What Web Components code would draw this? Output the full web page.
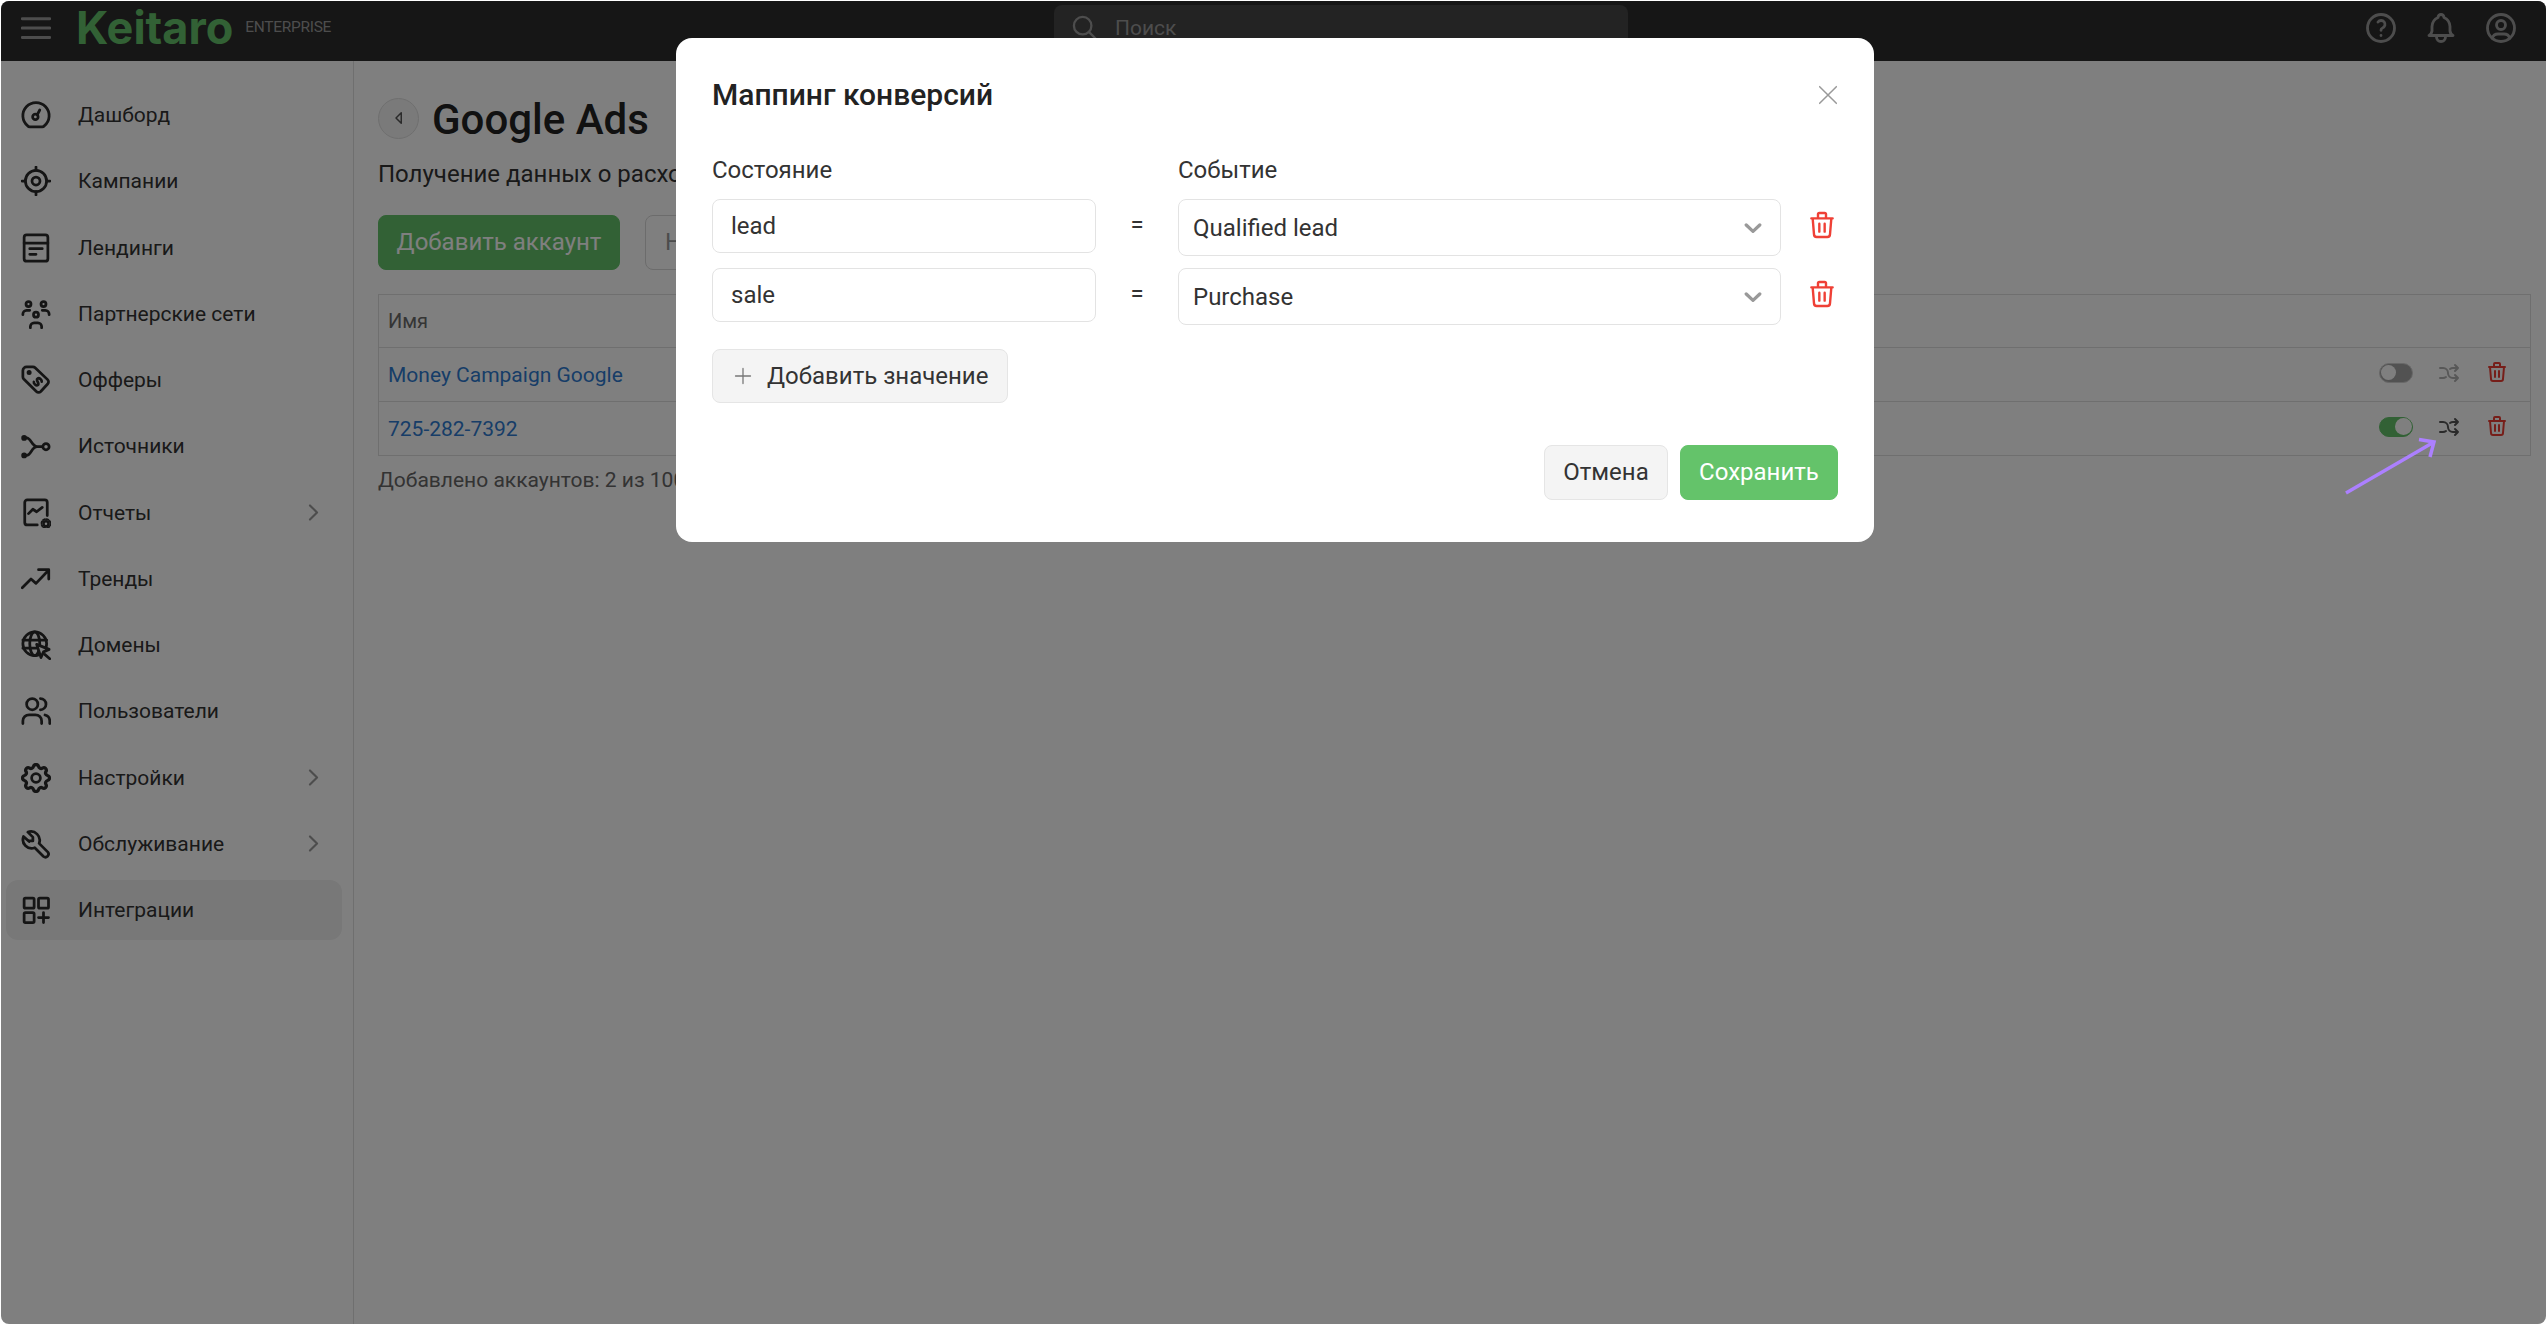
<!DOCTYPE html>
<html lang="ru">
<head>
<meta charset="utf-8">
<title>Keitaro</title>
<style>
  html, body { margin: 0; background: #fff; }
  body { font-family: Roboto, "Liberation Sans", sans-serif; }
</style>
</head>
<body>
<k-app>
  <k-topbar slot="top"></k-topbar>
  <k-sidebar slot="side">
    <k-nav-item icon="dashboard">Дашборд</k-nav-item>
    <k-nav-item icon="target">Кампании</k-nav-item>
    <k-nav-item icon="landing">Лендинги</k-nav-item>
    <k-nav-item icon="partners">Партнерские сети</k-nav-item>
    <k-nav-item icon="tag">Офферы</k-nav-item>
    <k-nav-item icon="sources">Источники</k-nav-item>
    <k-nav-item icon="report" more>Отчеты</k-nav-item>
    <k-nav-item icon="trend">Тренды</k-nav-item>
    <k-nav-item icon="domain">Домены</k-nav-item>
    <k-nav-item icon="users">Пользователи</k-nav-item>
    <k-nav-item icon="settings" more>Настройки</k-nav-item>
    <k-nav-item icon="tool" more>Обслуживание</k-nav-item>
    <k-nav-item icon="apps" active>Интеграции</k-nav-item>
  </k-sidebar>
  <k-accounts slot="main">
    <k-account-row name="Money Campaign Google"></k-account-row>
    <k-account-row name="725-282-7392" on></k-account-row>
  </k-accounts>
  <k-modal slot="modal" heading="Маппинг конверсий">
    <k-mapping-row state="lead" event="Qualified lead"></k-mapping-row>
    <k-mapping-row state="sale" event="Purchase"></k-mapping-row>
  </k-modal>
</k-app>

<script>
// icons, 24 units box
const ICONS = {
  menu: '<path d="M1 4.5h22M1 12h22M1 19.5h22"/>',
  dashboard: '<path d="M7 21.5h10a2 2 0 0 0 1.6-.8a10.5 10.5 0 1 0-13.2 0a2 2 0 0 0 1.6.8z"/><circle cx="11.5" cy="13.5" r="2.2"/><path d="M13 11.8l2-3.8"/>',
  target: '<circle cx="12" cy="12" r="8.5"/><circle cx="12" cy="12" r="3.2"/><path d="M12 .8v2.7M12 20.5v2.7M.8 12h2.7M20.5 12h2.7"/>',
  landing: '<rect x="2.5" y="1.5" width="19" height="21" rx="2"/><path d="M2.5 8h19M7 12.5h10M7 17h5"/>',
  partners: '<circle cx="6" cy="4" r="2"/><circle cx="18" cy="4" r="2"/><circle cx="12" cy="12.5" r="2"/><path d="M1.5 12.5v-.5a3 3 0 0 1 3-3h2.5M22.5 12.5v-.5a3 3 0 0 0-3-3h-2.5M7.5 23v-1a3 3 0 0 1 3-3h3a3 3 0 0 1 3 3v1"/>',
  tag: '<path d="M4.5 1.5h5a2.5 2.5 0 0 1 1.8.7l10 9.500a2.5 2.5 0 0 1 0 3.500l-5.500 6a2.5 2.5 0 0 1-3.500 0L2.200 11.200a2.5 2.5 0 0 1-.7-1.800v-5a3 3 0 0 1 3-2.900z"/><circle cx="6.5" cy="6" r=".9" fill="currentColor"/><path transform="rotate(45 13.5 13.5)" d="M15.5 11.2c-.6-1-3.8-1.2-4 .8s4 1.300 3.800 3.200-3.500 1.600-4 .6"/>',
  sources: '<path d="M3 5.5h1.5c3.5 0 4 7 8.5 7h4M3 19.5h1.5c3.5 0 4-7 8.5-7"/><circle cx="20" cy="12.5" r="2.5"/><circle cx="2.5" cy="5.5" r="1.2" fill="currentColor"/><circle cx="2.5" cy="19.5" r="1.2" fill="currentColor"/>',
  report: '<path d="M13 21.5H5a2 2 0 0 1-2-2V3.5a2 2 0 0 1 2-2h14a2 2 0 0 1 2 2V14"/><path d="M6 12.5l3.5-3.5 3 2 4.5-3.5"/><circle cx="20" cy="20.5" r="2" stroke-width="2"/><circle cx="20" cy="20.5" r="3.6" stroke-width="1.5" stroke-dasharray="1.5 1.33"/>',
  trend: '<path d="M1 19l7-7 4 3.5L22 5M14 4.5h8.2v7.5"/>',
  domain: '<circle cx="11" cy="11" r="9.5"/><ellipse cx="11" cy="11" rx="4" ry="9.5"/><path d="M1.5 8h19M1.5 14.5h12"/><path d="M12.5 11.5l10 4-4.5 2-2 4.5z" fill="#fff"/><path d="M19 19.5l4 3.5"/>',
  users: '<circle cx="9" cy="6.5" r="4.5"/><path d="M1.5 22v-2a5 5 0 0 1 5-5h5a5 5 0 0 1 5 5v2M15.5 2a4.5 4.5 0 0 1 0 9M23 22v-2a5 5 0 0 0-3.8-4.8"/>',
  settings: '<path d="M10.325 4.317c.426-1.756 2.924-1.756 3.35 0a1.724 1.724 0 0 0 2.573 1.066c1.543-.94 3.31.826 2.37 2.37a1.724 1.724 0 0 0 1.065 2.572c1.756.426 1.756 2.924 0 3.35a1.724 1.724 0 0 0-1.066 2.573c.94 1.543-.826 3.31-2.37 2.37a1.724 1.724 0 0 0-2.572 1.065c-.426 1.756-2.924 1.756-3.35 0a1.724 1.724 0 0 0-2.573-1.066c-1.543.94-3.31-.826-2.37-2.37a1.724 1.724 0 0 0-1.065-2.572c-1.756-.426-1.756-2.924 0-3.35a1.724 1.724 0 0 0 1.066-2.573c-.94-1.543.826-3.31 2.37-2.37c1 .608 2.296.07 2.572-1.065z" transform="translate(-2.4 -2.4) scale(1.2)"/><circle cx="12" cy="12" r="3.5"/>',
  tool: '<path d="M6.5 9.5h3v-3L5.5 2.5a7 7 0 0 1 9 9l7 7a2.5 2.5 0 0 1-3.5 3.5l-7-7a7 7 0 0 1-9-9l4.5 4z"/>',
  apps: '<rect x="2.5" y="2.5" width="8" height="8" rx="1"/><rect x="14" y="2.5" width="8" height="8" rx="1"/><rect x="2.5" y="14" width="8" height="8" rx="1"/><path d="M14 18h8M18 14v8"/>',
  help: '<circle cx="12" cy="12" r="9"/><path d="M12 17v.01M12 13.5a1.5 1.5 0 0 1 1-1.5a2.6 2.6 0 1 0-3-4"/>',
  bell: '<path d="M10 5a2 2 0 1 1 4 0a7 7 0 0 1 4 6v3a4 4 0 0 0 2 3h-16a4 4 0 0 0 2-3v-3a7 7 0 0 1 4-6"/><path d="M9 17v1a3 3 0 0 0 6 0v-1"/>',
  user: '<circle cx="12" cy="12" r="9"/><circle cx="12" cy="10" r="3"/><path d="M6.168 18.849a4 4 0 0 1 3.832-2.849h4a4 4 0 0 1 3.834 2.855"/>',
  search: '<circle cx="10" cy="10" r="7.5"/><path d="M21 21l-5.5-5.5"/>',
  trash: '<path d="M4 7h16M10 11v6M14 11v6M5 7l1 12a2 2 0 0 0 2 2h8a2 2 0 0 0 2-2l1-12M9 7v-3a1 1 0 0 1 1-1h4a1 1 0 0 1 1 1v3"/>',
  shuffle: '<path d="M18 4l3 3l-3 3M18 20l3-3l-3-3M3 7h3a5 5 0 0 1 5 5a5 5 0 0 0 5 5h5M21 7h-5a4.978 4.978 0 0 0-3 1m-4 8a4.984 4.984 0 0 1-3 1h-3"/>',
  chevronDown: '<path d="M3 8l9 8.5 9-8.5"/>',
  chevronRight: '<path d="M7 2l10 10-10 10"/>',
  plus: '<path d="M12 2v20M2 12h20"/>',
  close: '<path d="M2 2l20 20M22 2L2 22"/>',
  back: '<path d="M15 5l-7 7 7 7z"/>'
};

class KIcon extends HTMLElement {
  static get observedAttributes() {
    return ["name"];
  }
  constructor() {
    super();
    this.attachShadow({ mode: "open" });
  }
  attributeChangedCallback() {
    this.draw();
  }
  connectedCallback() {
    this.draw();
  }
  draw() {
    const size = this.getAttribute("size") || 30;
    const sw = this.getAttribute("stroke") || 2.2;
    this.shadowRoot.innerHTML = `
      <style>:host { display: inline-flex; flex: none; width: ${size}px; height: ${size}px; }</style>
      <svg viewBox="0 0 24 24" width="${size}" height="${size}" fill="none" stroke="currentColor"
        stroke-width="${sw}" stroke-linecap="round" stroke-linejoin="round">${ICONS[this.getAttribute("name")] || ""}</svg>`;
  }
}
customElements.define("k-icon", KIcon);

const tplApp = document.createElement("template");
tplApp.innerHTML = `
<style>
  :host { display: block; position: relative; margin: 1px; height: 1323px; border-radius: 8px; overflow: hidden; color: #333; }
  .body { display: flex; height: calc(100% - 60px); background: #fff; }
  .overlay { position: absolute; inset: 0; background: rgba(0,0,0,.5); }
  .arrow { position: absolute; left: 0; top: 0; pointer-events: none; }
  ::slotted([slot=modal]) { position: absolute; left: 675px; top: 37px; }
</style>
<slot name="top"></slot>
<div class="body"><slot name="side"></slot><slot name="main"></slot></div>
<div class="overlay"></div>
<slot name="modal"></slot>
<svg class="arrow" width="2545" height="1323" fill="none" stroke="#ac80ff" stroke-width="3.5">
  <path d="M2345 492L2433 441M2418 438.5l15 2.5-4 15"/>
</svg>`;
class KApp extends HTMLElement {
  constructor() {
    super();
    this.attachShadow({ mode: "open" }).appendChild(tplApp.content.cloneNode(true));
  }
}
customElements.define("k-app", KApp);

const tplTopbar = document.createElement("template");
tplTopbar.innerHTML = `
<style>
  :host { display: grid; grid-template-columns: 1053px 574px 1fr; height: 60px; background: #2c2c2c; color: #9a9a9a; }
  .left { display: flex; align-items: center; height: 54px; padding-left: 20px; }
  .logo { margin-left: 25px; font: 700 45px/54px Inter, sans-serif; letter-spacing: 0; color: #64c36a; }
  .ed { margin-left: 12px; margin-top: -2px; font: 400 15.5px/20px Roboto, sans-serif; letter-spacing: -.3px; }
  .search { display: flex; align-items: center; gap: 16px; height: 46px; margin-top: 4px; padding-left: 17px;
    background: #464646; border-radius: 8px 8px 0 0; font: 400 21px/24px Roboto, sans-serif; }
  .right { display: flex; justify-content: flex-end; align-items: center; gap: 24px; height: 54px; padding-right: 27px; }
</style>
<div class="left">
  <k-icon name="menu" stroke="2.4"></k-icon>
  <span class="logo">Keitaro</span>
  <span class="ed">ENTERPRISE</span>
</div>
<div class="search"><k-icon name="search" size="28" stroke="2"></k-icon><span>Поиск</span></div>
<div class="right">
  <k-icon name="help" size="36" stroke="1.9"></k-icon>
  <k-icon name="bell" size="36" stroke="1.9"></k-icon>
  <k-icon name="user" size="36" stroke="1.9"></k-icon>
</div>`;
class KTopbar extends HTMLElement {
  constructor() {
    super();
    this.attachShadow({ mode: "open" }).appendChild(tplTopbar.content.cloneNode(true));
  }
}
customElements.define("k-topbar", KTopbar);

const tplSidebar = document.createElement("template");
tplSidebar.innerHTML = `
<style>
  :host { display: flex; flex-direction: column; flex: none; box-sizing: border-box; width: 353px; gap: 6.25px;
    padding: 24px 11px 0 5px; border-right: 1px solid #dedede; }
</style>
<slot></slot>`;
class KSidebar extends HTMLElement {
  constructor() {
    super();
    this.attachShadow({ mode: "open" }).appendChild(tplSidebar.content.cloneNode(true));
  }
}
customElements.define("k-sidebar", KSidebar);

const tplNav = document.createElement("template");
tplNav.innerHTML = `
<style>
  :host { display: flex; align-items: center; height: 60px; padding-left: 15px; padding-right: 20px; border-radius: 12px;
    font: 400 21px/24px Roboto, sans-serif; color: #333; }
  :host([active]) { background: #f1f1f1; }
  .icon { color: #2a2a2a; }
  .label { flex: 1; margin-left: 27px; }
  .more { color: #9a9a9a; }
</style>
<k-icon class="icon"></k-icon><span class="label"><slot></slot></span>`;
class KNavItem extends HTMLElement {
  constructor() {
    super();
    this.attachShadow({ mode: "open" }).appendChild(tplNav.content.cloneNode(true));
    this.shadowRoot.querySelector("k-icon").setAttribute("name", this.getAttribute("icon"));
    if (this.hasAttribute("more")) {
      const c = document.createElement("k-icon");
      c.setAttribute("size", "17");
      c.setAttribute("stroke", "3");
      c.setAttribute("name", "chevronRight");
      c.className = "more";
      this.shadowRoot.appendChild(c);
    }
  }
}
customElements.define("k-nav-item", KNavItem);

const tplAccounts = document.createElement("template");
tplAccounts.innerHTML = `
<style>
  :host { display: block; flex: 1; min-width: 0; padding: 36px 15px 0 24px; color: #333; }
  .title { display: flex; align-items: center; gap: 13px; height: 42px; }
  .back { display: flex; align-items: center; justify-content: center; box-sizing: border-box; width: 41px; height: 41px;
    border: 1px solid #dedede; border-radius: 50%; background: #f4f4f4; color: #555; }
  h1 { margin: 3px 0 0; font: 500 42px/42px Roboto, sans-serif; color: #222; }
  p { margin: 20px 0 0; font: 400 24px/30px Roboto, sans-serif; white-space: nowrap; color: #333; }
  .actions { display: flex; gap: 25px; margin-top: 26px; }
  .btn { box-sizing: border-box; height: 55px; padding: 0 19px; border-radius: 8px; font: 400 24px/53px Roboto, sans-serif; border: 1px solid #e4e4e4; }
  .primary { width: 242px; padding: 0; text-align: center; background: #64c36a; border-color: #64c36a; color: #fff; }
  .plain { width: 110px; background: #fff; border-color: #d8d8d8; color: #999; }
  .table { margin-top: 24px; border: 1px solid #dedede; }
  .head { box-sizing: border-box; height: 52px; padding-left: 9px; font: 400 20px/52px Roboto, sans-serif; color: #6a6a6a; background: #fff; }
  .foot { margin-top: 12px; font: 400 21px/24px Roboto, sans-serif; color: #666; }
</style>
<div class="title">
  <span class="back"><k-icon name="back" size="18" stroke="2"></k-icon></span>
  <h1>Google Ads</h1>
</div>
<p>Получение данных о расходах</p>
<div class="actions"><span class="btn primary">Добавить аккаунт</span><span class="btn plain">Н</span></div>
<div class="table">
  <div class="head">Имя</div>
  <slot></slot>
</div>
<div class="foot">Добавлено аккаунтов: 2 из 100</div>`;
class KAccounts extends HTMLElement {
  constructor() {
    super();
    this.attachShadow({ mode: "open" }).appendChild(tplAccounts.content.cloneNode(true));
  }
}
customElements.define("k-accounts", KAccounts);

const tplRow = document.createElement("template");
tplRow.innerHTML = `
<style>
  :host { display: flex; align-items: center; box-sizing: border-box; height: 54px; padding: 0 21px 0 9px; border-top: 1px solid #dedede;
    font: 400 21px/24px Roboto, sans-serif; }
  .name { flex: 1; color: #2f7bd0; }
  .toggle { position: relative; box-sizing: border-box; width: 34px; height: 20px; margin-right: 24px; margin-top: -4px; border-radius: 10px; background: #a4a4a4; border: 1.5px solid #d0d0d0; }
  .toggle::after { content: ""; position: absolute; left: 1px; top: 1px; width: 15px; height: 15px; border-radius: 50%; background: #fff; }
  :host([on]) .toggle { background: #64c36a; border-color: #64c36a; }
  :host([on]) .toggle::after { left: auto; right: 0; top: 0; width: 17px; height: 17px; }
  .mix { color: #b0b0b0; margin-right: 24px; margin-top: -3px; }
  :host([on]) .mix { color: #555; }
  .del { color: #ec3d32; margin-top: -5px; }
</style>
<span class="name"></span>
<span class="toggle"></span>
<k-icon class="mix" name="shuffle" size="24" stroke="2"></k-icon>
<k-icon class="del" name="trash" size="24" stroke="2"></k-icon>`;
class KAccountRow extends HTMLElement {
  constructor() {
    super();
    this.attachShadow({ mode: "open" }).appendChild(tplRow.content.cloneNode(true));
    this.shadowRoot.querySelector(".name").textContent = this.getAttribute("name");
  }
}
customElements.define("k-account-row", KAccountRow);

const tplModal = document.createElement("template");
tplModal.innerHTML = `
<style>
  :host { display: block; box-sizing: border-box; width: 1198px; height: 504px; padding: 37px 36px 0; background: #fff; border-radius: 16px;
    color: #222; font-family: Roboto, sans-serif; }
  .top { display: flex; justify-content: space-between; align-items: center; height: 40px; }
  h2 { margin: 0; font: 500 30px/40px Roboto, sans-serif; color: #222; }
  .close { color: #999; }
  .labels { display: grid; grid-template-columns: 466px 1fr; margin-top: 42px; font: 400 24px/26px Roboto, sans-serif; color: #333; }
  .rows { display: grid; gap: 12px; margin-top: 16px; }
  .add { display: inline-flex; align-items: center; box-sizing: border-box; height: 54px; margin-top: 24px; padding: 0 19px 0 21px; background: #f4f4f4;
    border: 1px solid #e5e5e5; border-radius: 8px; font: 400 24px/26px Roboto, sans-serif; color: #333; }
  .add k-icon { margin-right: 15px; color: #777; }
  .foot { display: flex; justify-content: flex-end; gap: 12px; margin-top: 42px; }
  .btn { box-sizing: border-box; height: 55px; border-radius: 8px; font: 400 24px/53px Roboto, sans-serif; border: 1px solid #e5e5e5; text-align: center; }
  .cancel { width: 124px; background: #f4f4f4; color: #333; }
  .save { width: 158px; background: #64c36a; border-color: #64c36a; color: #fff; }
</style>
<div class="top"><h2></h2><k-icon class="close" name="close" size="20" stroke="1.8"></k-icon></div>
<div class="labels"><span>Состояние</span><span>Событие</span></div>
<div class="rows"><slot></slot></div>
<div class="add"><k-icon name="plus" size="18" stroke="1.7"></k-icon>Добавить значение</div>
<div class="foot"><span class="btn cancel">Отмена</span><span class="btn save">Сохранить</span></div>`;
class KModal extends HTMLElement {
  constructor() {
    super();
    this.attachShadow({ mode: "open" }).appendChild(tplModal.content.cloneNode(true));
    this.shadowRoot.querySelector("h2").textContent = this.getAttribute("heading");
  }
}
customElements.define("k-modal", KModal);

const tplMap = document.createElement("template");
tplMap.innerHTML = `
<style>
  :host { display: grid; grid-template-columns: 384px 82px 603px 1fr; align-items: start; height: 57px; font: 400 24px/26px Roboto, sans-serif; color: #333; }
  .field { box-sizing: border-box; border: 1px solid #e3e3e3; border-radius: 8px; background: #fff; }
  .input { height: 54px; padding: 0 18px; line-height: 52px; }
  .select { display: flex; align-items: center; justify-content: space-between; height: 57px; padding: 0 18px 0 14px; }
  .eq { height: 54px; line-height: 52px; text-align: center; }
  .chev { color: #999; }
  .del { justify-self: end; margin-top: 10px; color: #ef4036; }
</style>
<div class="field input"></div>
<div class="eq">=</div>
<div class="field select"><span></span><k-icon class="chev" name="chevronDown" size="18" stroke="4.4"></k-icon></div>
<k-icon class="del" name="trash" size="32" stroke="1.8"></k-icon>`;
class KMappingRow extends HTMLElement {
  constructor() {
    super();
    this.attachShadow({ mode: "open" }).appendChild(tplMap.content.cloneNode(true));
    this.shadowRoot.querySelector(".input").textContent = this.getAttribute("state");
    this.shadowRoot.querySelector(".select span").textContent = this.getAttribute("event");
  }
}
customElements.define("k-mapping-row", KMappingRow);
</script>
</body>
</html>
